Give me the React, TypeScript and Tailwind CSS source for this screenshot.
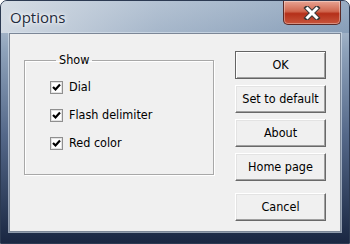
import React from 'react'

const font = "font-['DejaVu_Sans_Condensed','DejaVu_Sans',sans-serif]"

const CheckBox = ({ label }: { label: string }) => (
  <div className="flex h-[14px] items-center gap-[6px]">
    <div className="flex h-[13px] w-[13px] items-center justify-center border border-[#8f8f8f] bg-white shadow-[inset_0_0_0_1px_#e3e3e3]">
      <svg width="9" height="9" viewBox="0 0 9 9">
        <path d="M1 4 L3.5 6.5 L8 1.5" stroke="#000" strokeWidth="2.2" fill="none" />
      </svg>
    </div>
    <span className="text-[12.5px] leading-none text-black">{label}</span>
  </div>
)

const Button = ({ label, primary }: { label: string; primary?: boolean }) => (
  <button
    className={
      'flex h-[28px] w-[91px] items-center justify-center bg-[#f0f0f0] text-[12.5px] text-black ' +
      (primary
        ? 'border border-[#646464] shadow-[inset_1px_1px_0_#fff,inset_-1px_-1px_0_#a0a0a0]'
        : 'border border-t-[#fff] border-l-[#fff] border-r-[#696969] border-b-[#696969] shadow-[inset_-1px_-1px_0_#a0a0a0,inset_1px_1px_0_#e3e3e3]')
    }
  >
    {label}
  </button>
)

export default function App() {
  return (
    <div
      className={`${font} flex h-[244px] w-[350px] flex-col overflow-hidden rounded-t-[7px] border border-[#2c3a52] bg-[linear-gradient(180deg,#c3cfdc_0%,#8fa3bb_20%,#55698a_55%,#1a2742_100%)]`}
    >
      <div className="flex h-[32px] shrink-0 items-start justify-between bg-[linear-gradient(90deg,rgba(215,222,230,0.9)_0%,rgba(170,186,205,0.6)_45%,rgba(110,138,170,0.5)_100%)]">
        <span className="ml-[9px] mt-[7px] font-['Open_Sans',sans-serif] text-[15px] leading-[18px] text-[#1e2b3c] [text-shadow:0_0_6px_#fff,0_0_3px_#fff]">
          Options
        </span>
        <div className="mr-[8px] flex h-[24px] w-[58px] items-center justify-center rounded-b-[5px] border border-t-0 border-[#5b2a26] bg-[linear-gradient(180deg,#e8a493_0%,#d0674f_45%,#b5301a_55%,#c8553b_100%)] shadow-[inset_0_0_0_1px_rgba(255,255,255,0.35)]">
          <svg width="18" height="14" viewBox="0 0 18 14">
            <path d="M4 2 L14 12 M14 2 L4 12" stroke="#3a3a3a" strokeWidth="5" strokeLinecap="square" />
            <path d="M4.5 2.5 L13.5 11.5 M13.5 2.5 L4.5 11.5" stroke="#fff" strokeWidth="3" strokeLinecap="square" />
          </svg>
        </div>
      </div>
      <div className="mx-[8px] mb-[11px] flex flex-1 border border-[#7c8797] bg-[#f0f0f0] shadow-[0_0_0_1px_rgba(220,230,240,0.6)]">
        <div className="ml-[14px] mt-[19px] flex w-[190px] flex-col">
          <fieldset className="h-[122px] border border-[#a8a8a8] pl-[25px] shadow-[inset_1px_1px_0_#fff,1px_1px_0_#fff]">
            <legend className="ml-[6px] px-[3px] text-[12.5px] leading-[14px] text-black">Show</legend>
            <div className="mt-[13px] flex flex-col gap-[14px]">
              <CheckBox label="Dial" />
              <CheckBox label="Flash delimiter" />
              <CheckBox label="Red color" />
            </div>
          </fieldset>
        </div>
        <div className="ml-[21px] mt-[17px] flex flex-col">
          <Button label="OK" primary />
          <div className="mt-[6px] flex flex-col gap-[6px]">
            <Button label="Set to default" />
            <Button label="About" />
            <Button label="Home page" />
          </div>
          <div className="mt-[12px]">
            <Button label="Cancel" />
          </div>
        </div>
      </div>
    </div>
  )
}
